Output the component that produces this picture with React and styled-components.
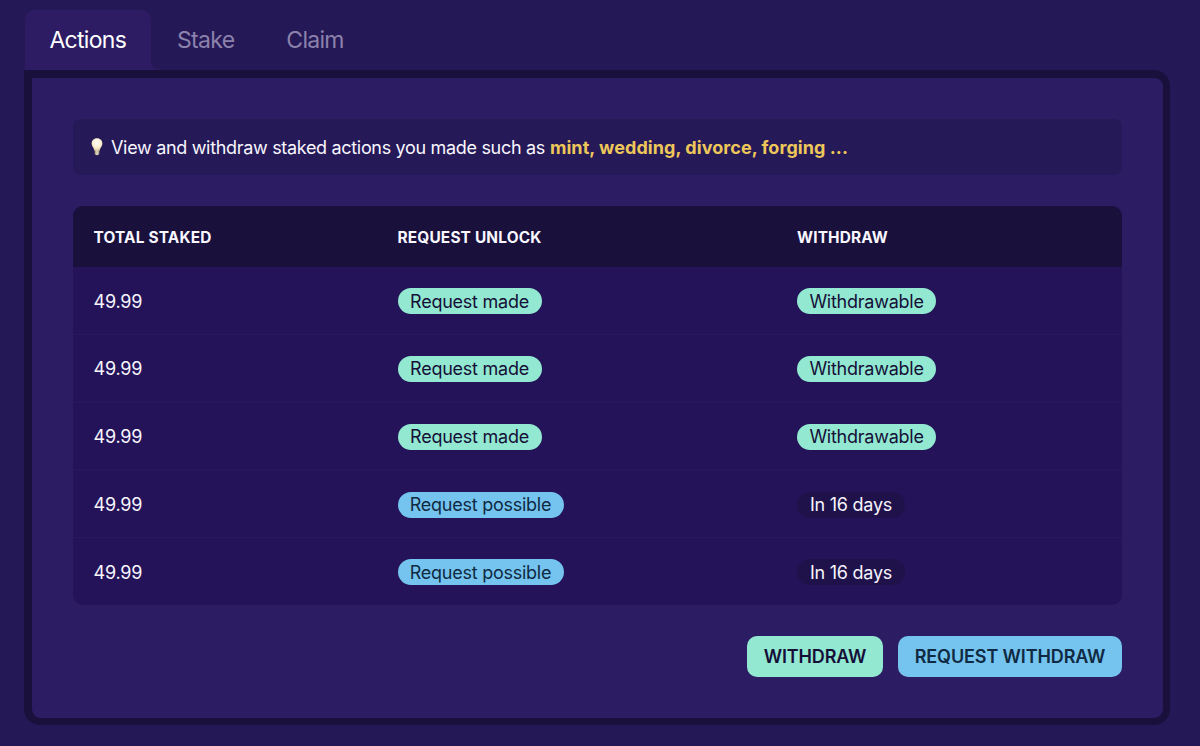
import React, { useState } from 'react'
import styled, { createGlobalStyle } from 'styled-components'

const tabs = [
  { name: 'Actions', width: 126 },
  { name: 'Stake', width: 109 },
  { name: 'Claim', width: 109 },
]

const stakes = [
  { id: 1, total: '49.99', requested: true, days: 0 },
  { id: 2, total: '49.99', requested: true, days: 0 },
  { id: 3, total: '49.99', requested: true, days: 0 },
  { id: 4, total: '49.99', requested: false, days: 16 },
  { id: 5, total: '49.99', requested: false, days: 16 },
]

const Bulb = () => (
  <BulbIcon viewBox="0 0 12 18">
    <defs>
      <radialGradient id="glass" cx="0.5" cy="0.35" r="0.6">
        <stop offset="0" stopColor="#fffdf0" />
        <stop offset="0.6" stopColor="#fbf2d8" />
        <stop offset="1" stopColor="#e3cf9f" />
      </radialGradient>
      <linearGradient id="base" x1="0" x2="1">
        <stop offset="0" stopColor="#9c8f78" />
        <stop offset="0.5" stopColor="#e6dbc2" />
        <stop offset="1" stopColor="#9c8f78" />
      </linearGradient>
    </defs>
    <path d="M6 0.2C2.8 0.2 0.6 2.5 0.6 5.5C0.6 8.6 3.1 9.8 3.6 13H8.4C8.9 9.8 11.4 8.6 11.4 5.5C11.4 2.5 9.2 0.2 6 0.2Z" fill="url(#glass)" />
    <path d="M3.7 12.2H8.3V15.6C8.3 16.6 7.2 17.2 6 17.2C4.8 17.2 3.7 16.6 3.7 15.6Z" fill="url(#base)" />
  </BulbIcon>
)

const App = () => {
  const [active, setActive] = useState('Actions')

  return (
    <Page>
      <GlobalStyle />
      <Tabs>
        {tabs.map((tab) => (
          <Tab key={tab.name} $width={tab.width} $active={tab.name === active} onClick={() => setActive(tab.name)}>
            {tab.name}
          </Tab>
        ))}
      </Tabs>
      <Panel>
        <Info>
          <Bulb />
          <InfoText>View and withdraw staked actions you made such as</InfoText>
          <Highlight>mint, wedding, divorce, forging ...</Highlight>
        </Info>
        <Table>
          <HeadRow>
            <HeadCell>Total staked</HeadCell>
            <HeadCell>Request unlock</HeadCell>
            <HeadCell>Withdraw</HeadCell>
          </HeadRow>
          {stakes.map((item) => (
            <Row key={item.id}>
              <Amount>{item.total}</Amount>
              <div>
                {item.requested
                  ? <Badge $color="green" $width={144}>Request made</Badge>
                  : <Badge $color="blue" $width={166}>Request possible</Badge>}
              </div>
              <div>
                {item.days === 0
                  ? <Badge $color="green" $width={139}>Withdrawable</Badge>
                  : <Badge $color="dark" $width={108}>In {item.days} days</Badge>}
              </div>
            </Row>
          ))}
        </Table>
        <Buttons>
          <Button $color="green" $width={136}>Withdraw</Button>
          <Button $color="blue" $width={224}>Request withdraw</Button>
        </Buttons>
      </Panel>
    </Page>
  )
}

const colors = {
  green: { bg: '#92e8d0', text: '#150f38' },
  blue: { bg: '#75c3ef', text: '#0f2a42' },
  dark: { bg: '#1f124a', text: '#f6f3fd' },
}

const GlobalStyle = createGlobalStyle`
  * {
    box-sizing: border-box;
  }
  body {
    margin: 0;
    background-color: #251856;
    font-family: Inter, 'Liberation Sans', sans-serif;
    color: #f8f6fe;
  }
`

const Page = styled.div`
  height: 746px;
  padding: 10px 30px 0 24px;
  display: flex;
  flex-direction: column;
  overflow: hidden;
`

const Tabs = styled.div`
  display: flex;
  gap: 0.4px;
  height: 60px;
  padding-left: 0.8px;
  flex-shrink: 0;
`

const Tab = styled.button`
  position: relative;
  width: ${(p) => p.$width}px;
  padding: 0;
  border: none;
  border-radius: 10px 10px 0 0;
  background-color: ${(p) => (p.$active ? '#2d1c63' : 'transparent')};
  color: ${(p) => (p.$active ? '#ffffff' : '#8c82ac')};
  font-family: Inter, 'Liberation Sans', sans-serif;
  font-size: 23px;
  letter-spacing: -0.7px;
  cursor: pointer;
  /* small inverted corner where the tab meets the panel */
  &::after {
    content: '';
    display: ${(p) => (p.$active ? 'block' : 'none')};
    position: absolute;
    left: 100%;
    bottom: 0;
    width: 8px;
    height: 8px;
    background: radial-gradient(circle at 100% 0, transparent 7.5px, #2d1c63 8px);
  }
`

const Panel = styled.div`
  width: 1146px;
  height: 655px;
  border: solid #19113c;
  border-width: 8px 7px 7px 8px;
  border-radius: 0 16px 16px 16px;
  background-color: #2c1c63;
  padding: 41px 41px 0;
`

const Info = styled.div`
  display: flex;
  align-items: center;
  height: 56px;
  padding-left: 18px;
  border-radius: 8px;
  background-color: #251957;
  font-size: 18px;
`

const BulbIcon = styled.svg`
  width: 12px;
  height: 18px;
  margin-right: 8px;
`

const InfoText = styled.span`
  padding-top: 1px;
  letter-spacing: -0.32px;
  margin-right: 5px;
`

const Highlight = styled.span`
  padding-top: 1px;
  font-weight: 700;
  color: #eec75a;
  letter-spacing: 0.06px;
`

const Table = styled.div`
  margin-top: 31px;
  border-radius: 10px;
  overflow: hidden;
  background-color: #241358;
`

const HeadRow = styled.div`
  display: grid;
  grid-template-columns: 304px 399.5px 1fr;
  align-items: center;
  height: 61px;
  padding: 0 20.5px;
  background-color: #19113c;
`

const HeadCell = styled.div`
  padding-top: 1px;
  font-size: 15.4px;
  font-weight: 700;
  letter-spacing: 0.17px;
  text-transform: uppercase;
`

const Row = styled(HeadRow)`
  height: 67.8px;
  padding-top: 1.5px;
  background-color: transparent;
  border-bottom: 1px solid #29195c;
  &:last-child {
    height: 66.8px;
    border-bottom: none;
  }
`

const Amount = styled.div`
  font-size: 18px;
  letter-spacing: -0.2px;
`

const Badge = styled.span`
  display: flex;
  align-items: center;
  justify-content: center;
  width: ${(p) => p.$width}px;
  height: 26px;
  border-radius: 13px;
  background-color: ${(p) => colors[p.$color].bg};
  color: ${(p) => colors[p.$color].text};
  font-size: 18px;
  letter-spacing: -0.25px;
  white-space: pre;
`

const Buttons = styled.div`
  display: flex;
  justify-content: flex-end;
  gap: 15px;
  margin-top: 31px;
`

const Button = styled.button`
  width: ${(p) => p.$width}px;
  height: 41px;
  padding: 0;
  border: none;
  border-radius: 10px;
  background-color: ${(p) => colors[p.$color].bg};
  color: ${(p) => colors[p.$color].text};
  font-family: Inter, 'Liberation Sans', sans-serif;
  font-size: 18px;
  font-weight: 600;
  letter-spacing: -0.12px;
  text-transform: uppercase;
  white-space: nowrap;
  cursor: pointer;
`

export default App
